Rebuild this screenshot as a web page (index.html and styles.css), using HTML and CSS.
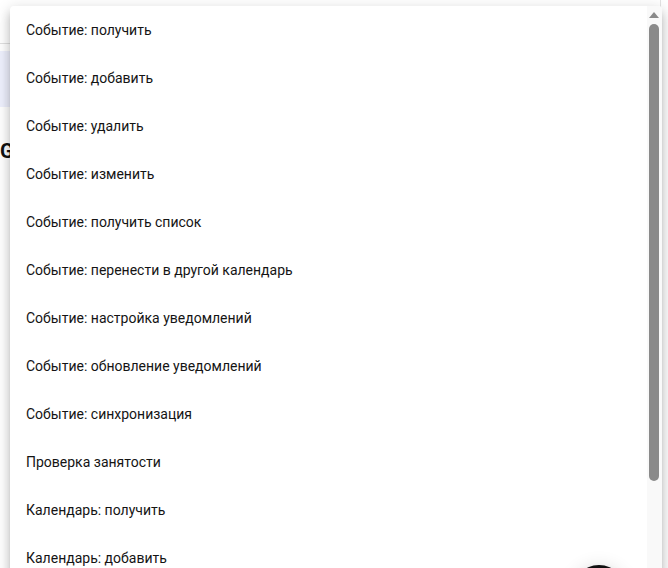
FILE: index.html
```html
<!DOCTYPE html>
<html lang="ru">
<head>
<meta charset="utf-8">
<title>Menu</title>
<link rel="stylesheet" href="styles.css">
</head>
<body>
<div class="page">
  <div class="topbar"></div>
  <div class="banner"></div>
  <h2 class="heading">Google Calendar</h2>
</div>

<div class="menu">
  <ul class="list">
    <li class="item">Событие: получить</li>
    <li class="item">Событие: добавить</li>
    <li class="item">Событие: удалить</li>
    <li class="item">Событие: изменить</li>
    <li class="item">Событие: получить список</li>
    <li class="item">Событие: перенести в другой календарь</li>
    <li class="item">Событие: настройка уведомлений</li>
    <li class="item">Событие: обновление уведомлений</li>
    <li class="item">Событие: синхронизация</li>
    <li class="item">Проверка занятости</li>
    <li class="item">Календарь: получить</li>
    <li class="item">Календарь: добавить</li>
    <li class="item">Календарь: удалить</li>
    <li class="item">Календарь: изменить</li>
  </ul>
  <div class="scrollbar">
    <div class="arrow"></div>
    <div class="thumb"></div>
  </div>
</div>

<div class="fab"></div>
</body>
</html>
```

FILE: styles.css
```css
html, body {
  margin: 0;
  padding: 0;
  height: 100%;
  overflow: hidden;
  background: #ffffff;
  font-family: Roboto, "Noto Sans", sans-serif;
}

.page {
  height: 100%;
  width: 661px;
  border-right: 1px solid #e3e3e3;
  box-sizing: border-box;
  display: flex;
  flex-direction: column;
}

.topbar {
  height: 43px;
  border-bottom: 1px solid #e0e0e0;
  flex-shrink: 0;
}

.banner {
  margin-top: 7px;
  height: 56px;
  background: #eef0fd;
  flex-shrink: 0;
}

.heading {
  margin: 32px 0 0 0;
  font-size: 20px;
  font-weight: 700;
  color: #111111;
  line-height: 24px;
}

.menu {
  position: absolute;
  left: 10px;
  top: 6px;
  width: 652px;
  height: 600px;
  background: #ffffff;
  border-radius: 4px;
  box-shadow: 0px 5px 5px -3px rgba(0,0,0,0.2), 0px 8px 10px 1px rgba(0,0,0,0.14), 0px 3px 14px 2px rgba(0,0,0,0.12);
  overflow: hidden;
  display: flex;
}

.list {
  list-style: none;
  margin: 0;
  padding: 0;
  flex: 1;
}

.item {
  height: 48px;
  display: flex;
  align-items: center;
  padding: 0 16px;
  font-size: 14px;
  line-height: 21px;
  letter-spacing: 0;
  color: #141414;
}

.scrollbar {
  width: 15px;
  flex-shrink: 0;
  background: #f9f9f9;
  display: flex;
  flex-direction: column;
  align-items: center;
  padding-top: 6px;
  box-sizing: border-box;
}

.arrow {
  width: 0;
  height: 0;
  border-left: 5px solid transparent;
  border-right: 5px solid transparent;
  border-bottom: 6px solid #8a8a8a;
  margin-left: -1px;
}

.thumb {
  margin-top: 6px;
  width: 10px;
  height: 457px;
  border-radius: 5px;
  background: #8a8a8a;
  margin-left: -1px;
}

.fab {
  position: absolute;
  left: 571px;
  top: 565px;
  width: 56px;
  height: 56px;
  border-radius: 50%;
  background: #111111;
  box-shadow: 0px 3px 5px -1px rgba(0,0,0,0.2), 0px 6px 10px 0px rgba(0,0,0,0.14), 0px 1px 18px 0px rgba(0,0,0,0.12);
}
```
